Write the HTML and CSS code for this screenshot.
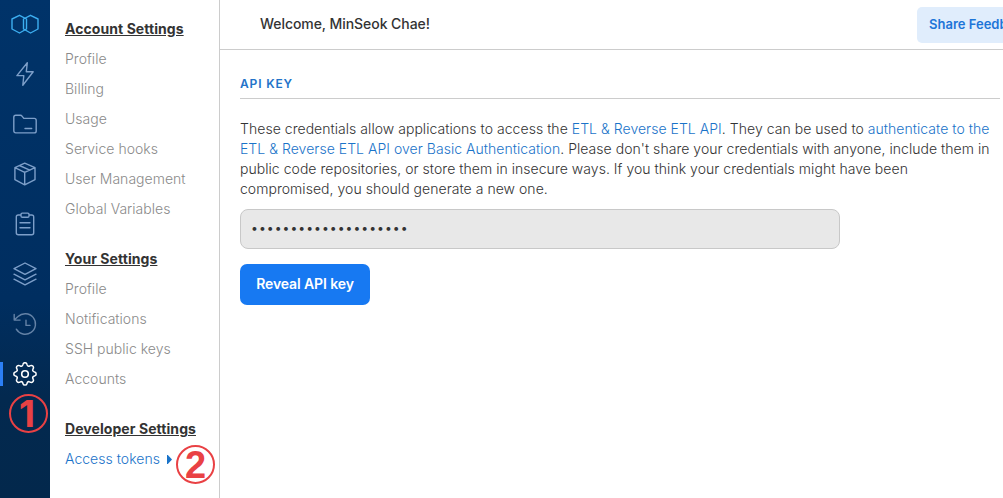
FILE: index.html
```html
<!DOCTYPE html>
<html lang="en">
<head>
<meta charset="utf-8">
<title>API Key</title>
<link rel="stylesheet" href="styles.css">
</head>
<body>
<div class="app">
  <aside class="rail">
    <a class="rail-item logo"><svg width="30" height="22" viewBox="0 0 30 22"><path d="M9.500 2.300 16.500 6v10l-7 4L2 16V6z"/><path d="M20.500 2.300 28 6v10l-7.500 4-7-4V6z"/></svg></a>
    <a class="rail-item"><svg width="24" height="24" viewBox="0 0 24 24"><path d="M14.300.8 3.900 13.600h6.900L9.800 23.200 20.200 9.700h-6.900z"/></svg></a>
    <a class="rail-item"><svg width="24" height="24" viewBox="0 0 24 24"><path d="M.8 18.600V5.300Q.8 3.300 2.800 3.300H7.400q1 0 1.600.8l1.800 2.300h10.400q2 0 2 2v10.500q0 2-2 2H2.800q-2 0-2-2.300zM12 16.500h6.700"/></svg></a>
    <a class="rail-item"><svg width="24" height="24" viewBox="0 0 24 24"><path d="M11.700 1.200 22 5.700v12L11.700 22.800 1.900 17.700v-12zM1.900 5.700l9.800 4.600L22 5.700M11.700 10.300v12.500M6.500 3.500l10.300 4.600"/></svg></a>
    <a class="rail-item"><svg width="24" height="24" viewBox="0 0 24 24"><path d="M8 3H5.200Q3.300 3 3.300 5v15.800q0 2 2 2h13.400q2 0 2-2V5q0-2-2-2H16M8 2.400q0-1.300 1.300-1.300h5.400Q16 1.100 16 2.400V4q0 1.300-1.300 1.300H9.300Q8 5.300 8 4zM7 10.800h10M7 15.800h10"/></svg></a>
    <a class="rail-item"><svg width="24" height="24" viewBox="0 0 24 24"><path d="M12 1 23 6.700 12 12.400 1 6.700zM1 12.200 12 17.800 23 12.200M1 17.200 12 22.800 23 17.200"/></svg></a>
    <a class="rail-item history"><svg width="24" height="24" viewBox="0 0 24 24"><path d="M1.200 2.500v5.600h5.900M1.200 8.100 5 4.600A10.300 10.300 0 1 1 3.300 17.200M13 8.200v5.200h4"/></svg></a>
    <a class="rail-item active"><svg width="24" height="24" viewBox="0 0 24 24"><path d="M9.900 2.600C10.500.6 13.500.6 14.100 2.600l.3.900c.4 1.100 1.500 1.600 2.500 1.100l.9-.4c1.900-.9 3.900 1.100 3 3l-.4.900c-.5 1 0 2.100 1.100 2.500l.9.300c2 .6 2 3.600 0 4.200l-.9.300c-1.100.4-1.600 1.500-1.100 2.500l.4.900c.9 1.900-1.100 3.900-3 3l-.9-.4c-1-.5-2.100 0-2.500 1.100l-.3.900c-.6 2-3.600 2-4.200 0l-.3-.9c-.4-1.100-1.500-1.600-2.500-1.100l-.9.400c-1.900.9-3.900-1.100-3-3l.4-.9c.5-1 0-2.100-1.100-2.500l-.9-.3c-2-.6-2-3.600 0-4.200l.9-.3c1.100-.4 1.600-1.500 1.100-2.500l-.4-.9c-.9-1.900 1.100-3.900 3-3l.9.400c1 .5 2.100 0 2.500-1.100z" transform="translate(.7 -.3) scale(.94)"/><circle cx="12" cy="12" r="3.300"/></svg></a>
    <span class="marker marker-one">1</span>
  </aside>
  <nav class="settings">
    <section class="group">
      <h2>Account Settings</h2>
      <a>Profile</a><a>Billing</a><a>Usage</a><a>Service hooks</a><a>User Management</a><a>Global Variables</a>
    </section>
    <section class="group">
      <h2>Your Settings</h2>
      <a>Profile</a><a>Notifications</a><a>SSH public keys</a><a>Accounts</a>
    </section>
    <section class="group">
      <h2>Developer Settings</h2>
      <a class="current">Access tokens<svg class="caret" width="5" height="9" viewBox="0 0 5 9"><path d="M0 0h.8L5 4.500.8 9H0z"/></svg></a>
    </section>
    <span class="marker marker-two">2</span>
  </nav>
  <div class="content">
    <header class="topbar">
      <div class="welcome">Welcome, MinSeok Chae!</div>
      <button class="feedback">Share Feedback</button>
    </header>
    <main class="panel">
      <h1>API KEY</h1>
      <p>These credentials allow applications to access the <a>ETL &amp; Reverse ETL API</a>. They can be used to <a>authenticate to the<br>ETL &amp; Reverse ETL API over Basic Authentication</a>. Please don't share your credentials with anyone, include them in<br>public code repositories, or store them in insecure ways. If you think your credentials might have been<br>compromised, you should generate a new one.</p>
      <div class="key-field">••••••••••••••••••••</div>
      <button class="reveal">Reveal API key</button>
    </main>
  </div>
</div>
</body>
</html>
```

FILE: styles.css
```css
* { box-sizing: border-box; }
body { margin: 0; overflow: hidden; background: #fff; color: #333; font-family: Inter, sans-serif; font-size: 14px; }
button { border: 0; font-family: inherit; font-size: 14px; white-space: nowrap; }
.app { display: flex; width: 1003px; height: 498px; overflow: hidden; }

.rail { position: relative; flex: none; width: 50px; background: linear-gradient(#003369, #002e60 60%, #03294f 80%, #03284c); }
.rail-item { display: flex; align-items: center; justify-content: center; height: 50px; color: #7d9fc9; }
.rail-item svg { fill: none; stroke: currentColor; stroke-width: 1.4; stroke-linejoin: round; stroke-linecap: round; }
.rail-item.logo { height: 49px; padding-bottom: 2px; color: #3caef0; }
.rail-item.history { color: #6482a6; }
.rail-item.active { color: #fff; background: linear-gradient(#2c7ff5, #2c7ff5) 0 center / 3px 24px no-repeat; }
.rail-item.active svg { stroke-width: 1.6; }

.settings { position: relative; flex: none; width: 170px; padding: 14px 0 0 15px; border-right: 1px solid #ccc; }
.group { display: flex; flex-direction: column; margin-bottom: 20px; }
.group h2, .group a { margin: 0; line-height: 30px; height: 30px; letter-spacing: .03px; }
.group h2 { font-size: 14px; font-weight: 700; text-decoration: underline; letter-spacing: .07px; }
.group a { color: #8a8a8a; font-weight: 300; }
.group a.current { color: #1a73c9; }
.caret { margin-left: 7px; fill: #1a73c9; }

.marker { position: absolute; display: flex; align-items: center; justify-content: center; width: 39px; height: 39px; border: 2px solid #e94144; border-radius: 50%; color: #e94144; font-weight: 700; line-height: 1; }
.marker-one { left: 9px; top: 394px; padding-right: 3px; font-family: Inter, sans-serif; font-size: 37px; }
.marker-two { left: 126px; top: 445px; font-family: "Liberation Sans", sans-serif; font-size: 38px; }

.content { flex: 1; min-width: 0; }
.topbar { display: flex; align-items: center; justify-content: space-between; height: 50px; padding-left: 40px; border-bottom: 1px solid #ccc; }
.welcome { padding-bottom: 2px; font-weight: 500; letter-spacing: -.06px; }
.feedback { flex: none; width: 130px; height: 36px; margin-right: -44px; padding: 0 12px 2px; border-radius: 5px; background: #e0edfc; color: #1d75d8; font-weight: 600; font-size: 13px; text-align: left; }
.panel { padding: 25px 3px 0 20px; }
.panel h1 { height: 24px; margin: 0 0 20px; border-bottom: 1px solid #ccc; color: #2273c9; font-size: 12px; font-weight: 600; line-height: 18px; letter-spacing: .85px; }
.panel p { margin: 0 0 10px; font-weight: 300; line-height: 20px; letter-spacing: .04px; white-space: nowrap; }
.panel p a { color: #1a73c9; }
.key-field { width: 600px; height: 40px; padding-left: 9.500px; border: 1px solid #c8c8c8; border-radius: 8px; background: #e8e8e8; font-size: 14px; font-weight: 300; line-height: 36px; }
.reveal { display: block; width: 130px; height: 41px; margin-top: 15px; padding: 0 0 2px; border-radius: 7px; background: #1779f2; color: #fff; font-weight: 600; letter-spacing: -.1px; }
```
